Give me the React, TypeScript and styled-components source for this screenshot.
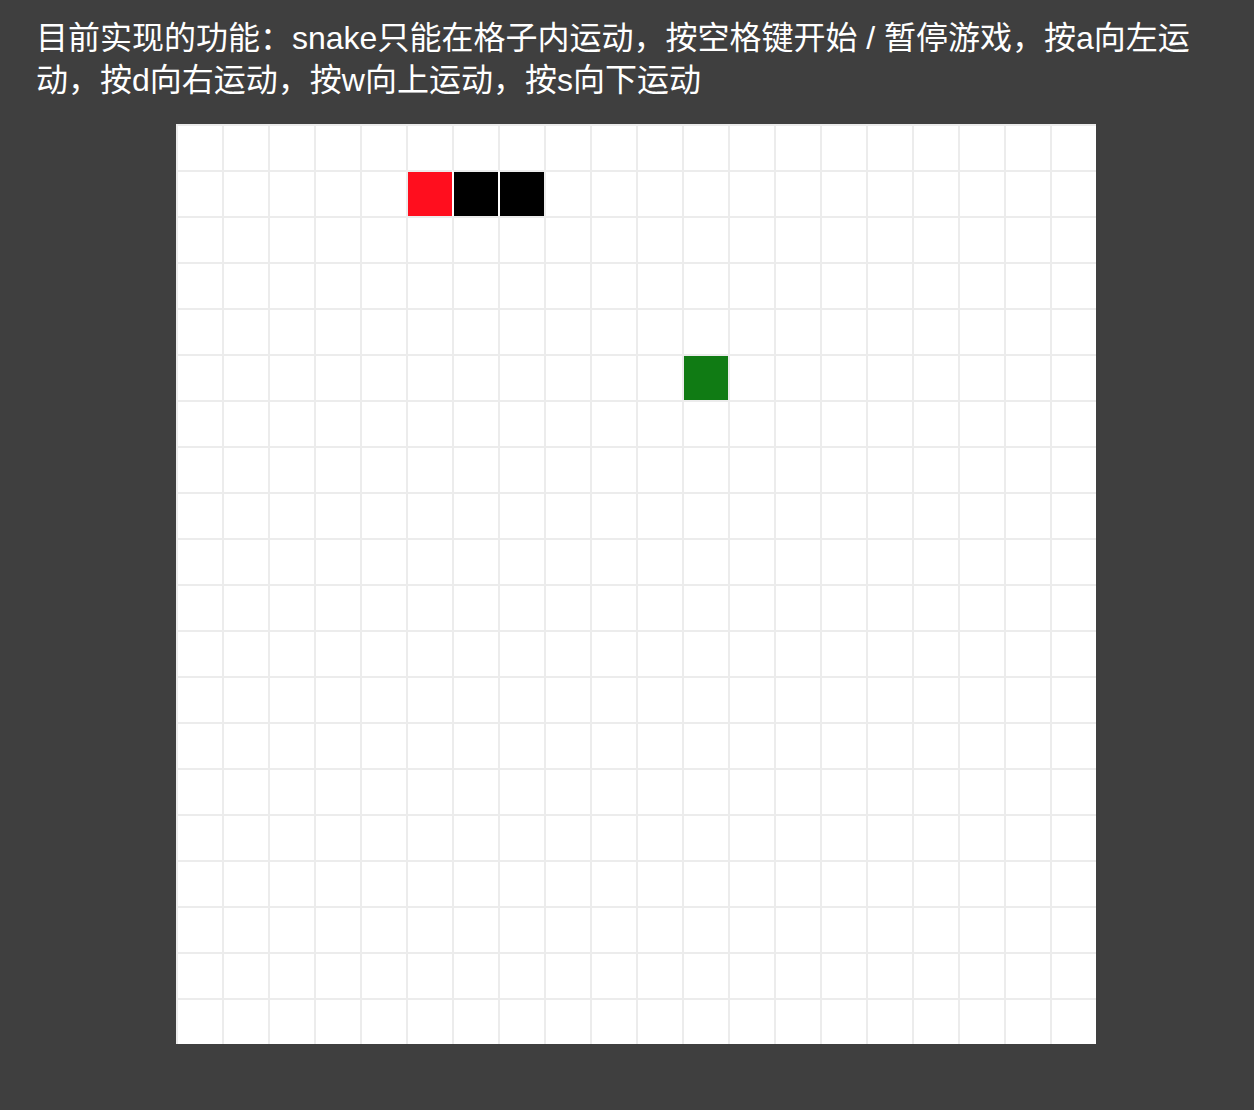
import styled, { createGlobalStyle } from 'styled-components';

const GRID = 20;
const CELL = 46;

const snake = [
  { x: 5, y: 1, head: true },
  { x: 6, y: 1, head: false },
  { x: 7, y: 1, head: false },
];
const food = { x: 11, y: 5 };

const GlobalStyle = createGlobalStyle`
  html, body {
    margin: 0;
    padding: 0;
    background-color: #3f3f3f;
  }
`;

export const Page = styled.div`
  min-height: 100vh;
  box-sizing: border-box;
  padding: 17px 36px 0;
  background-color: #3f3f3f;
  font-family: 'Liberation Sans', 'Noto Sans CJK SC', sans-serif;
`;

export const Title = styled.p`
  margin: 0;
  color: #ffffff;
  font-size: 32px;
  line-height: 42px;
`;

export const Board = styled.div`
  display: grid;
  grid-template-columns: repeat(${GRID}, ${CELL}px);
  grid-template-rows: repeat(${GRID}, ${CELL}px);
  width: ${GRID * CELL}px;
  margin: 23px 0 0 140px;
  background-color: #ffffff;
`;

type Kind = 'empty' | 'head' | 'body' | 'food';

const fills: Record<Kind, string> = {
  empty: '#ffffff',
  head: '#ff0e1e',
  body: '#000000',
  food: '#107b14',
};

export const Cell = styled.div<{ $kind: Kind }>`
  box-sizing: border-box;
  border-top: 2px solid #ececec;
  border-left: 2px solid ${(p) => (p.$kind === 'body' ? '#ffffff' : '#ececec')};
  background-color: ${(p) => fills[p.$kind]};
  background-clip: padding-box;
`;

function kindAt(x: number, y: number): Kind {
  const part = snake.find((s) => s.x === x && s.y === y);
  if (part) return part.head ? 'head' : 'body';
  if (food.x === x && food.y === y) return 'food';
  return 'empty';
}

function App() {
  const cells = [];
  for (let y = 0; y < GRID; y++) {
    for (let x = 0; x < GRID; x++) {
      cells.push(<Cell key={`${x}-${y}`} $kind={kindAt(x, y)} />);
    }
  }

  return (
    <Page>
      <GlobalStyle />
      <Title>
        目前实现的功能：snake只能在格子内运动，按空格键开始 / 暂停游戏，按a向左运动，按d向右运动，按w向上运动，按s向下运动
      </Title>
      <Board>{cells}</Board>
    </Page>
  );
}

export default App;
